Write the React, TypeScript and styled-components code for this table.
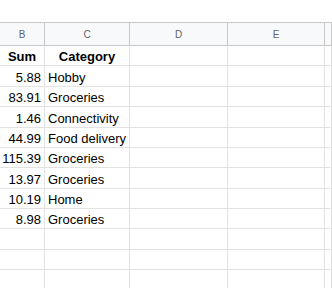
import styled, { createGlobalStyle } from "styled-components";

const GlobalStyle = createGlobalStyle`
  html, body {
    margin: 0;
    padding: 0;
    background: #ffffff;
    overflow: hidden;
  }
`;

const Page = styled.div`
  width: 332px;
  height: 288px;
  padding-top: 22px;
  box-sizing: border-box;
  overflow: hidden;
  font-family: "Liberation Sans", Arial, sans-serif;
`;

const Row = styled.div<{ $head?: boolean }>`
  display: grid;
  grid-template-columns: 45px 85px 98px 97px 1fr;
  height: ${(p) => (p.$head ? "24px" : "20.375px")};
  box-sizing: border-box;
  border-top: ${(p) => (p.$head ? "1px solid #c7c7c7" : "none")};
  border-bottom: 1px solid ${(p) => (p.$head ? "#c7c7c7" : "#e2e2e2")};
  background: ${(p) => (p.$head ? "#f8f9fa" : "#ffffff")};
`;

const ColLabel = styled.div`
  display: flex;
  align-items: center;
  justify-content: center;
  border-right: 1px solid #c7c7c7;
  font-size: 10px;
  color: #5f6368;
`;

const Cell = styled.div<{ $align?: "left" | "right" | "center"; $bold?: boolean }>`
  display: flex;
  align-items: flex-end;
  justify-content: ${(p) =>
    p.$align === "right" ? "flex-end" : p.$align === "center" ? "center" : "flex-start"};
  padding: 0 3px 1px;
  border-right: 1px solid #e2e2e2;
  font-size: 13px;
  line-height: 15px;
  font-weight: ${(p) => (p.$bold ? 700 : 400)};
  color: #000000;
  white-space: nowrap;
  overflow: hidden;
`;

const data: [string, string][] = [
  ["5.88", "Hobby"],
  ["83.91", "Groceries"],
  ["1.46", "Connectivity"],
  ["44.99", "Food delivery"],
  ["115.39", "Groceries"],
  ["13.97", "Groceries"],
  ["10.19", "Home"],
  ["8.98", "Groceries"],
];

export default function App() {
  return (
    <>
      <GlobalStyle />
      <Page>
        <Row $head>
          {["B", "C", "D", "E", ""].map((c, i) => (
            <ColLabel key={i}>{c}</ColLabel>
          ))}
        </Row>
        <Row>
          <Cell $align="center" $bold>Sum</Cell>
          <Cell $align="center" $bold>Category</Cell>
          <Cell />
          <Cell />
          <Cell />
        </Row>
        {data.map(([sum, cat], i) => (
          <Row key={i}>
            <Cell $align="right">{sum}</Cell>
            <Cell>{cat}</Cell>
            <Cell />
            <Cell />
            <Cell />
          </Row>
        ))}
        {[0, 1, 2].map((i) => (
          <Row key={`e${i}`}>
            <Cell />
            <Cell />
            <Cell />
            <Cell />
            <Cell />
          </Row>
        ))}
      </Page>
    </>
  );
}
